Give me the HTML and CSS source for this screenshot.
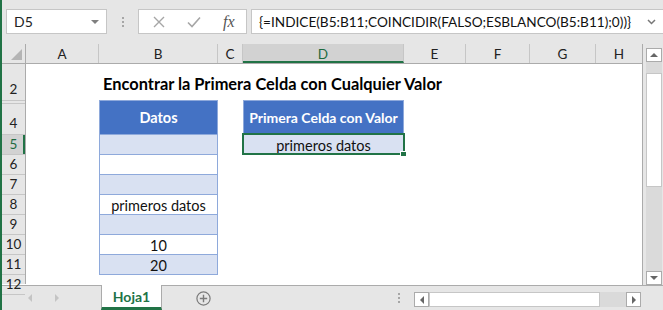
FILE: index.html
```html
<!DOCTYPE html>
<html lang="es">
<head>
  <meta charset="UTF-8" />
  <meta name="viewport" content="width=device-width, initial-scale=1.0"/>
  <title>Hoja1</title>
  <link rel="stylesheet" href="styles.css">
</head>
<body>
  <div class="window">
    <div class="toolbar">
      <div class="namebox">
        <span>D5</span>
        <span class="caret"></span>
      </div>
      <div class="grip"><i></i><i></i><i></i></div>
      <div class="fxbox">
        <svg width="12" height="12" viewBox="0 0 12 12"><path d="M1 1L11 11M11 1L1 11" stroke="#a6a6a6" stroke-width="1.4" fill="none"/></svg>
        <svg width="14" height="12" viewBox="0 0 14 12"><path d="M1 6.5L5 10.5L13 1.5" stroke="#a6a6a6" stroke-width="1.6" fill="none"/></svg>
        <span class="fx">fx</span>
      </div>
      <div class="formula">
        <span>{=INDICE(B5:B11;COINCIDIR(FALSO;ESBLANCO(B5:B11);0))}</span>
        <svg width="9" height="6" viewBox="0 0 9 6"><path d="M1 1L4.5 4.5L8 1" stroke="#777" stroke-width="1.5" fill="none"/></svg>
      </div>
    </div>

    <div class="sheet">
      <div class="grid">
        <div class="colheads">
          <div class="corner"><span class="tri"></span></div>
          <div class="ch w-a">A</div>
          <div class="ch w-b">B</div>
          <div class="ch w-c">C</div>
          <div class="ch w-d active">D</div>
          <div class="ch w-e">E</div>
          <div class="ch w-f">F</div>
          <div class="ch w-g">G</div>
          <div class="ch w-h">H</div>
        </div>
        <div class="main">
          <div class="rowheads">
            <div class="rh r-2">2</div>
            <div class="rh r-hidden"></div>
            <div class="rh r-4">4</div>
            <div class="rh active">5</div>
            <div class="rh">6</div>
            <div class="rh">7</div>
            <div class="rh">8</div>
            <div class="rh">9</div>
            <div class="rh">10</div>
            <div class="rh">11</div>
            <div class="rh r-12">12</div>
          </div>
          <div class="cells">
            <div class="title">Encontrar la Primera Celda con Cualquier Valor</div>

            <div class="table table-b">
              <div class="head">Datos</div>
              <div class="cell band"></div>
              <div class="cell"></div>
              <div class="cell band"></div>
              <div class="cell">primeros datos</div>
              <div class="cell band"></div>
              <div class="cell">10</div>
              <div class="cell band">20</div>
            </div>

            <div class="table table-d">
              <div class="head">Primera Celda con Valor</div>
              <div class="cell band selected">
                primeros datos
                <span class="sel-box"></span>
                <span class="handle"></span>
              </div>
            </div>
          </div>
        </div>
      </div>
      <div class="vscroll">
        <div class="sbtn up"><span class="arr-up"></span></div>
        <div class="vtrack top"></div>
        <div class="vthumb"></div>
        <div class="vtrack"></div>
        <div class="sbtn down"><span class="arr-down"></span></div>
      </div>
    </div>

    <div class="tabbar">
      <div class="nav">
        <span class="nav-l"></span>
        <span class="nav-r"></span>
      </div>
      <div class="tab">Hoja1</div>
      <div class="add">
        <svg width="15" height="15" viewBox="0 0 15 15"><circle cx="7.5" cy="7.5" r="6.6" stroke="#7a7a7a" stroke-width="1.2" fill="none"/><path d="M7.5 3.8V11.2M3.8 7.5H11.2" stroke="#7a7a7a" stroke-width="1.4"/></svg>
      </div>
      <div class="hgrip"><i></i><i></i><i></i></div>
      <div class="hscroll">
        <div class="sbtn left"><span class="arr-left"></span></div>
        <div class="hthumb"></div>
        <div class="htrack"></div>
        <div class="sbtn right"><span class="arr-right"></span></div>
      </div>
    </div>
  </div>
</body>
</html>
```

FILE: styles.css
```css
* {
  box-sizing: border-box;
}

body {
  margin: 0;
  font-family: Lato, "Open Sans", sans-serif;
  background: #e6e6e6;
}

.window {
  width: 663px;
  height: 310px;
  border-left: 2px solid #217346;
  background: #e6e6e6;
  overflow: hidden;
}

/* formula bar */
.toolbar {
  height: 44px;
  display: flex;
  align-items: flex-start;
  padding-top: 9px;
}

.namebox {
  width: 101px;
  height: 25px;
  margin-left: 4px;
  background: #fff;
  border: 1px solid #c6c6c6;
  display: flex;
  align-items: center;
  justify-content: space-between;
  padding: 0 7px 0 7px;
  font-size: 14px;
  color: #222;
}

.caret {
  width: 0;
  height: 0;
  border-left: 4px solid transparent;
  border-right: 4px solid transparent;
  border-top: 4px solid #7f7f7f;
}

.grip {
  width: 31px;
  height: 25px;
  display: flex;
  flex-direction: column;
  align-items: center;
  justify-content: center;
  gap: 2px;
}

.grip i, .hgrip i {
  display: block;
  width: 2px;
  height: 2px;
  background: #a6a6a6;
}

.fxbox {
  width: 109px;
  height: 25px;
  background: #fff;
  border: 1px solid #c6c6c6;
  display: flex;
  align-items: center;
  padding-left: 14px;
  gap: 22px;
}

.fx {
  font-family: "Liberation Serif", serif;
  font-style: italic;
  font-size: 16px;
  color: #555;
}

.formula {
  width: 412px;
  height: 25px;
  margin-left: 4px;
  background: #fff;
  border: 1px solid #c6c6c6;
  border-right: none;
  display: flex;
  align-items: center;
  justify-content: space-between;
  padding: 0 7px 0 7px;
  font-size: 13.6px;
  color: #111;
}

/* sheet */
.sheet {
  height: 241px;
  display: flex;
}

.grid {
  width: 641px;
  background: #fff;
  border-right: 1px solid #ababab;
}

.colheads {
  height: 20px;
  display: flex;
  background: #e6e6e6;
  border-bottom: 1px solid #ababab;
}

.corner {
  width: 24px;
  border-right: 1px solid #ababab;
  position: relative;
}

.tri {
  position: absolute;
  right: 3px;
  bottom: 3px;
  width: 0;
  height: 0;
  border-left: 11px solid transparent;
  border-bottom: 11px solid #b4b4b4;
}

.ch {
  border-right: 1px solid #c6c6c6;
  display: flex;
  align-items: center;
  justify-content: center;
  font-size: 13.5px;
  color: #222;
}

.ch.active {
  background: #d2d2d2;
  border-bottom: 2px solid #217346;
  color: #1d6b3f;
  padding-top: 2px;
}

.w-a { width: 73px; }
.w-b { width: 119px; }
.w-c { width: 25px; }
.w-d { width: 161px; }
.w-e { width: 62px; }
.w-f { width: 64px; }
.w-g { width: 66px; }
.w-h { width: 46px; border-right: none; }

.main {
  display: flex;
  height: 220px;
}

.rowheads {
  width: 24px;
  background: #e6e6e6;
  border-right: 1px solid #ababab;
  display: flex;
  flex-direction: column;
}

.rh {
  height: 20px;
  flex: none;
  border-bottom: 1px solid #c6c6c6;
  display: flex;
  align-items: flex-end;
  justify-content: center;
  padding-bottom: 2px;
  font-size: 13.5px;
  color: #222;
}

.rh.r-2 { height: 37px; padding-bottom: 3px; }
.rh.r-hidden { height: 3px; padding: 0; }
.rh.r-4 { height: 31px; padding-bottom: 3px; }
.rh.r-12 { height: 20px; }

.rh.active {
  background: #d2d2d2;
  color: #1d6b3f;
  box-shadow: inset -2px 0 0 #217346;
}

.cells {
  flex: 1;
  display: grid;
  grid-template-columns: 73px 119px 25px 161px 62px 64px 66px 46px;
  grid-template-rows: 37px 3px 31px repeat(7, 20px) 1fr;
}

.title {
  grid-column: 2 / 9;
  grid-row: 1;
  white-space: nowrap;
  padding: 0 0 8px 4px;
  display: flex;
  align-items: flex-end;
  font-size: 16.4px;
  font-weight: bold;
  color: #000;
}

.table {
  display: flex;
  flex-direction: column;
}

.table-b {
  grid-column: 2;
  grid-row: 2 / 11;
}

.table-d {
  grid-column: 4;
  grid-row: 2 / 5;
}

.head {
  height: 35px;
  margin-top: -1px;
  background: #4472c4;
  border: 1px solid #8ea9db;
  display: flex;
  align-items: center;
  justify-content: center;
  color: #fff;
  font-weight: bold;
  font-size: 14.5px;
}

.table-d .head {
  font-size: 14px;
}

.cell {
  height: 20px;
  border: 1px solid #8ea9db;
  border-top: none;
  display: flex;
  align-items: flex-end;
  justify-content: center;
  font-size: 14.5px;
  line-height: 17px;
  color: #111;
  background: #fff;
}

.cell.band {
  background: #d9e1f2;
}

.selected {
  position: relative;
}

.sel-box {
  position: absolute;
  left: -2px;
  right: -2px;
  top: -2px;
  bottom: -1px;
  border: 2px solid #217346;
}

.handle {
  position: absolute;
  right: -4px;
  bottom: -3px;
  width: 7px;
  height: 6px;
  background: #217346;
  border: 1px solid #fff;
}

/* vertical scrollbar */
.vscroll {
  width: 20px;
  padding: 4px 1px 0 3px;
  display: flex;
  flex-direction: column;
}

.sbtn {
  background: #fff;
  border: 1px solid #ababab;
  display: flex;
  align-items: center;
  justify-content: center;
  flex: none;
}

.vscroll .sbtn {
  height: 14px;
}

.vtrack {
  flex: 1;
  background: #dadada;
}

.vtrack.top {
  flex: none;
  height: 11px;
}

.vthumb {
  height: 114px;
  background: #fff;
  border: 1px solid #c6c6c6;
  flex: none;
}

.arr-up, .arr-down, .arr-left, .arr-right {
  width: 0;
  height: 0;
}

.arr-up {
  border-left: 4px solid transparent;
  border-right: 4px solid transparent;
  border-bottom: 4px solid #666;
}

.arr-down {
  border-left: 4px solid transparent;
  border-right: 4px solid transparent;
  border-top: 4px solid #666;
}

.arr-left {
  border-top: 4px solid transparent;
  border-bottom: 4px solid transparent;
  border-right: 4px solid #666;
}

.arr-right {
  border-top: 4px solid transparent;
  border-bottom: 4px solid transparent;
  border-left: 4px solid #666;
}

/* sheet tabs */
.tabbar {
  height: 25px;
  display: flex;
  border-top: 1px solid #ababab;
}

.nav {
  width: 99px;
  display: flex;
  align-items: center;
  padding-left: 26px;
  gap: 23px;
}

.nav-l {
  border-top: 4px solid transparent;
  border-bottom: 4px solid transparent;
  border-right: 4px solid #c4c4c4;
}

.nav-r {
  border-top: 4px solid transparent;
  border-bottom: 4px solid transparent;
  border-left: 4px solid #c4c4c4;
}

.tab {
  width: 61px;
  margin-top: -1px;
  background: #fff;
  border-left: 1px solid #ababab;
  border-right: 1px solid #ababab;
  border-bottom: 3px solid #217346;
  display: flex;
  align-items: center;
  justify-content: center;
  padding-top: 1px;
  font-size: 14px;
  font-weight: bold;
  color: #217346;
}

.add {
  width: 82px;
  display: flex;
  align-items: center;
  padding-left: 34px;
}

.hgrip {
  width: 170px;
  display: flex;
  flex-direction: column;
  align-items: flex-end;
  justify-content: center;
  gap: 2px;
  padding-right: 14px;
}

.hscroll {
  width: 227px;
  height: 15px;
  margin-top: 6px;
  display: flex;
}

.hscroll .sbtn {
  width: 15px;
}

.hthumb {
  width: 172px;
  background: #fff;
  border: 1px solid #c6c6c6;
}

.htrack {
  width: 26px;
  background: #dadada;
}
```
